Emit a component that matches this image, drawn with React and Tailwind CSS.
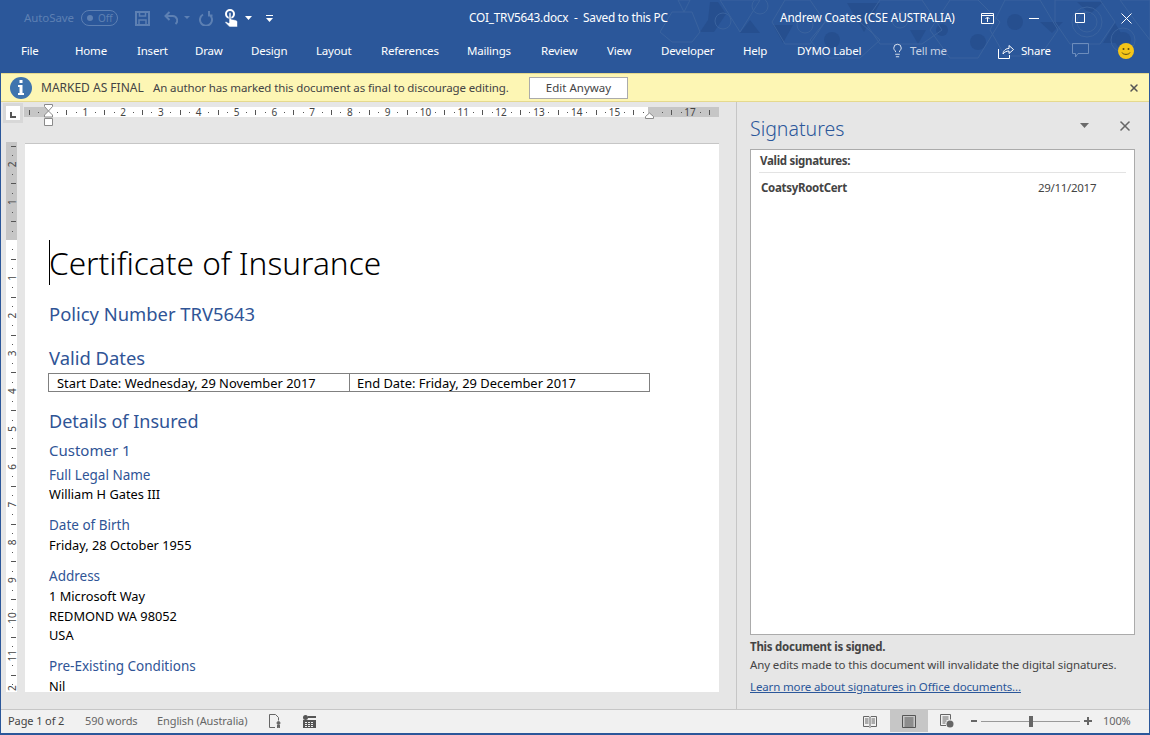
import { Lightbulb, X } from 'lucide-react'

const sans = 'font-["Noto_Sans",sans-serif]'

const tabs = [
  { label: 'File', w: 'w-[54px]' },
  { label: 'Home', w: 'w-[62px]' },
  { label: 'Insert', w: 'w-[58px]' },
  { label: 'Draw', w: 'w-[56px]' },
  { label: 'Design', w: 'w-[65px]' },
  { label: 'Layout', w: 'w-[65px]' },
  { label: 'References', w: 'w-[86px]' },
  { label: 'Mailings', w: 'w-[74px]' },
  { label: 'Review', w: 'w-[66px]' },
  { label: 'View', w: 'w-[54px]' },
  { label: 'Developer', w: 'w-[82px]' },
  { label: 'Help', w: 'w-[54px]' },
  { label: 'DYMO Label', w: 'w-[95px]' },
]

function TitlePattern() {
  // faint hexagon and triangle texture behind the title bar
  return (
    <svg className="absolute left-[660px] top-0" width="490" height="73" viewBox="0 0 490 73">
      <g fill="#264f8f">
        <polygon points="50,2 58,2 66,14 54,32 40,32 48,20" />
        <polygon points="90,20 100,33 80,33" />
        <polygon points="113,25 133,25 123,43" />
        <polygon points="187,3 220,3 204,32" />
        <polygon points="380,22 403,22 392,33" />
        <polygon points="417,2 443,2 430,14" />
        <polygon points="443,43 467,43 455,23" />
        <polygon points="250,30 266,30 258,44" />
        <circle cx="172" cy="40" r="8" />
        <circle cx="282" cy="30" r="6" />
        <circle cx="318" cy="42" r="8" />
        <circle cx="355" cy="22" r="8" />
        <circle cx="463" cy="40" r="8" />
      </g>
      <g fill="none" stroke="#3a639f" strokeWidth="1">
        <polygon points="18,0 30,0 24,12" />
        <polygon points="0,32 12,12 32,12 40,32 32,42 12,42" />
        <circle cx="63" cy="21" r="8" />
        <circle cx="100" cy="6" r="8" />
        <polygon points="60,0 80,32 100,0" />
        <polygon points="125,0 150,0 165,22 150,44 125,44 112,22" />
        <circle cx="145" cy="25" r="8" />
        <polygon points="165,22 200,22 220,40 200,58 165,58 150,40" />
        <polygon points="220,0 262,0 282,30 262,44 220,44 205,22" />
        <circle cx="240" cy="20" r="8" />
        <polygon points="290,0 318,0 340,22 318,58 290,58 270,30" />
        <polygon points="345,0 380,0 398,30 380,56 345,56 330,30" />
        <polygon points="395,0 440,0 455,22 440,44 410,44 395,22" />
        <circle cx="427" cy="22" r="10" />
        <circle cx="427" cy="22" r="15" />
        <polygon points="460,0 490,0 490,40 476,22" />
        <circle cx="463" cy="40" r="12" />
      </g>
    </svg>
  )
}

function QuickAccess() {
  return (
    <div className="flex items-center">
      <span className="ml-[24px] w-[50px] text-[11.5px] tracking-[-0.1px] text-[#5d80b3]">AutoSave</span>
      <span className="ml-[7px] flex h-[16px] w-[37px] items-center rounded-full border border-[#5d80b3] pl-[5px] text-[10px] text-[#5d80b3]">
        <span className="h-[6px] w-[6px] rounded-full bg-[#5d80b3]" />
        <span className="ml-[5px]">Off</span>
      </span>
      <svg className="ml-[17px]" width="15" height="15" viewBox="0 0 15 15" fill="none" stroke="#5d80b3" strokeWidth="2">
        <path d="M1 1h13v13H1z" />
        <path d="M4.500 1v4h6V1M4 14V9h7v5" strokeWidth="1.500" />
      </svg>
      <svg className="ml-[14px]" width="14" height="14" viewBox="0 0 14 14" fill="none" stroke="#5d80b3" strokeWidth="2">
        <path d="M5.500 1 1.500 5l4 4M1.500 5h7a4.500 4.500 0 0 1 3 8" />
      </svg>
      <svg className="ml-[6px]" width="6" height="4" viewBox="0 0 6 4" fill="#5d80b3">
        <path d="M0 0h6L3 3z" />
      </svg>
      <svg className="ml-[9px]" width="14" height="15" viewBox="0 0 14 15" fill="none" stroke="#5d80b3" strokeWidth="2">
        <path d="M4 3.500a6 6 0 1 0 6 0M10 0v4.500h3.500" />
      </svg>
      <svg className="ml-[11px]" width="14" height="19" viewBox="0 0 14 19">
        <circle cx="6" cy="5" r="4" fill="none" stroke="#fff" strokeWidth="2" />
        <path d="M5 4.500a1 1 0 0 1 2 0V10l4.500 1c1.200.3 2 1 2 2.200V18H5.500L1 13.500l1-1 3 1.500z" fill="#fff" stroke="#2b579a" strokeWidth="0.600" />
      </svg>
      <svg className="ml-[7px]" width="7" height="4" viewBox="0 0 7 4" fill="#fff">
        <path d="M0 0h7L3.500 4z" />
      </svg>
      <svg className="ml-[14px]" width="7" height="7" viewBox="0 0 7 7" fill="#fff">
        <path d="M0 0h7v1H0zM0 3h7L3.500 7z" />
      </svg>
    </div>
  )
}

function WindowButtons() {
  return (
    <div className="flex items-center">
      <svg width="13" height="11" viewBox="0 0 13 11" fill="none" stroke="#fff">
        <path d="M.5.500h12v10H.5zM.5 2.500h12M6.500 9V4.500M4.500 6l2-2 2 2" />
      </svg>
      <svg className="ml-[35px]" width="10" height="10" viewBox="0 0 10 10" stroke="#fff">
        <path d="M0 5.500h10" />
      </svg>
      <svg className="ml-[36px]" width="10" height="10" viewBox="0 0 10 10" fill="none" stroke="#fff">
        <path d="M.5.500h9v9h-9z" />
      </svg>
      <svg className="ml-[36px] mr-[18px]" width="11" height="11" viewBox="0 0 11 11" stroke="#fff">
        <path d="m.5.500 10 10M10.500.500l-10 10" />
      </svg>
    </div>
  )
}

function HRuler() {
  const ticks = []
  for (let i = -2; i <= 78; i++) {
    const x = 47.5 + i * 9.45
    if (x > 718) break
    const q = ((i % 4) + 4) % 4
    if (q === 0) continue
    ticks.push(
      q === 2
        ? <rect key={i} x={Math.round(x)} y="8" width="1" height="5" fill="#555" />
        : <rect key={i} x={Math.round(x)} y="10" width="1" height="1" fill="#555" />
    )
  }
  const nums = []
  for (let n = 1; n <= 17; n++) {
    if (n === 16) continue
    nums.push(
      <text key={n} x={47.5 + n * 37.8} y="14" textAnchor="middle" fontSize="10" fill="#444" fontFamily="Noto Sans, sans-serif">{n}</text>
    )
  }
  return (
    <svg className="absolute left-[-1px] top-0" width="720" height="26" viewBox="0 0 720 26">
      <rect x="24" y="5" width="24" height="10" fill="#c6c6c6" />
      <rect x="48" y="5" width="600" height="10" fill="#fff" />
      <rect x="648" y="5" width="71" height="10" fill="#c6c6c6" />
      {ticks}
      {nums}
      <path d="M44.500 2.500h8v2l-4 4.500-4-4.500zM44.500 15v-2l4-4 4 4v2z" fill="#fff" stroke="#8a8a8a" />
      <path d="M44.500 16.500h8v7h-8z" fill="#fff" stroke="#8a8a8a" />
      <path d="M645.500 16.500v-2l4-3.500 4 3.500v2z" fill="#fff" stroke="#8a8a8a" />
    </svg>
  )
}

function VRuler() {
  const ticks = []
  for (let i = -10; i <= 48; i++) {
    const y = 98 + i * 9.45
    if (y < 2 || y > 549) continue
    const q = ((i % 4) + 4) % 4
    if (q === 0) continue
    ticks.push(
      q === 2
        ? <rect key={i} x="7" y={Math.round(y)} width="5" height="1" fill="#555" />
        : <rect key={i} x="8" y={Math.round(y)} width="1" height="1" fill="#555" />
    )
  }
  const nums = []
  for (let n = -2; n <= 11; n++) {
    if (n === 0) continue
    const y = 98 + n * 37.8
    nums.push(
      <text key={n} x="0" y="0" transform={`translate(12 ${y}) rotate(-90)`} textAnchor="middle" fontSize="10" fill="#444" fontFamily="Noto Sans, sans-serif">{Math.abs(n)}</text>
    )
  }
  return (
    <svg className="ml-[3px] mt-[40px]" width="16" height="550" viewBox="0 0 16 550">
      <rect x="2" y="0" width="11" height="98" fill="#c6c6c6" />
      <rect x="2" y="98" width="11" height="452" fill="#fff" />
      {ticks}
      {nums}
      <text x="0" y="0" transform="translate(12 549) rotate(-90)" textAnchor="start" fontSize="10" fill="#444" fontFamily="Noto Sans, sans-serif">2</text>
    </svg>
  )
}

function Heading({ className, children }) {
  return <div className={`text-[#2f5496] ${className}`}>{children}</div>
}

function Document() {
  return (
    <div className="ml-[5px] mt-[41px] flex h-[549px] w-[694px] flex-col overflow-hidden border-t border-[#c6c6c6] bg-white pl-[24px] pr-[69px] text-black">
      <div className="relative mt-[96px] h-[46px] text-[31.6px] font-light leading-[46px]">
        <span className="absolute left-0 top-0 h-[45px] w-px bg-black" />
        Certificate of Insurance
      </div>
      <Heading className="mt-[15px] text-[18.4px] leading-[26px]">Policy Number TRV5643</Heading>
      <Heading className="mt-[18px] text-[18.4px] leading-[26px]">Valid Dates</Heading>
      <div className="-ml-px mt-[2px] flex h-[19px] w-[602px] border border-[#808080] text-[12.9px] leading-[18px]">
        <div className="w-[301px] border-r border-[#808080] pl-[8px]">Start Date: Wednesday, 29 November 2017</div>
        <div className="pl-[7px]">End Date: Friday, 29 December 2017</div>
      </div>
      <Heading className="mt-[16px] text-[18px] leading-[26px]">Details of Insured</Heading>
      <Heading className="mt-[5px] text-[15px] leading-[22px]">Customer 1</Heading>
      <Heading className="mt-[4px] text-[13.5px] leading-[20px]">Full Legal Name</Heading>
      <div className="text-[12.8px] leading-[18px]">William H Gates III</div>
      <Heading className="mt-[12px] text-[13.5px] leading-[20px]">Date of Birth</Heading>
      <div className="text-[12.8px] leading-[20px]">Friday, 28 October 1955</div>
      <Heading className="mt-[11px] text-[13.5px] leading-[20px]">Address</Heading>
      <div className="text-[12.8px] leading-[21px]">1 Microsoft Way</div>
      <div className="text-[12.8px] leading-[18px]">REDMOND WA 98052</div>
      <div className="text-[12.8px] leading-[20px]">USA</div>
      <Heading className="mt-[11px] text-[13.5px] leading-[20px]">Pre-Existing Conditions</Heading>
      <div className="text-[12.8px] leading-[20px]">Nil</div>
    </div>
  )
}

function SignaturePane() {
  return (
    <div className="flex w-[413px] flex-col border-l border-[#c6c6c6] pl-[13px] pr-[14px]">
      <div className="flex h-[47px] shrink-0 items-center">
        <span className="mt-[7px] text-[19.5px] font-light text-[#2b579a]">Signatures</span>
        <svg className="ml-auto mt-[-1px]" width="9" height="5" viewBox="0 0 9 5" fill="#6a6a6a">
          <path d="M0 0h9L4.500 5z" />
        </svg>
        <X className="ml-[28px] mr-[2px] text-[#666]" size={16} strokeWidth={2.4} />
      </div>
      <div className="h-[486px] shrink-0 border border-[#ababab] bg-white px-[8px] text-[11.5px] tracking-[-0.3px] text-[#444]">
        <div className="h-[23px] border-b border-[#e3e3e3] pl-px font-bold leading-[22px]">Valid signatures:</div>
        <div className="mt-[6px] flex pl-[2px] leading-[18px]">
          <span className="w-[277px] font-bold">CoatsyRootCert</span>
          <span>29/11/2017</span>
        </div>
      </div>
      <div className="mt-[3px] text-[11.5px] font-bold leading-[18px] tracking-[-0.25px] text-[#444]">This document is signed.</div>
      <div className="whitespace-nowrap text-[11.5px] leading-[18px] tracking-[-0.12px] text-[#444]">Any edits made to this document will invalidate the digital signatures.</div>
      <div className="mt-[4px] text-[11.5px] leading-[18px] tracking-[-0.14px] text-[#2b579a] underline">Learn more about signatures in Office documents...</div>
    </div>
  )
}

function StatusBar() {
  return (
    <div className="flex h-[24px] shrink-0 items-center border-t border-[#c6c6c6] bg-[#f1f1f1] pb-[1px] pl-[7px] text-[11px] tracking-[-0.1px] text-[#666]">
      <span className="w-[77px] text-[#444]">Page 1 of 2</span>
      <span className="w-[72px]">590 words</span>
      <span className="w-[112px]">English (Australia)</span>
      <svg width="12" height="14" viewBox="0 0 12 14" fill="none" stroke="#666">
        <path d="M6 13.500H.5V.5h6l3 3v3" />
        <circle cx="9.500" cy="9" r="1.500" fill="#666" />
        <path d="M8.500 11v3l1-1 1 1v-3" fill="#666" />
      </svg>
      <svg className="ml-[22px]" width="13" height="13" viewBox="0 0 13 13" fill="#555">
        <circle cx="2.500" cy="2.500" r="2.500" />
        <path d="M5 1h8v2H5zM0 5h13v8H0z" />
        <path d="M2 7h2v1H2zM5 7h2v1H5zM8 7h2v1H8zM2 9h2v1H2zM5 9h2v1H5zM8 9h2v1H8zM2 11h2v1H2zM5 11h2v1H5zM8 11h2v1H8z" fill="#f1f1f1" />
      </svg>
      <svg className="ml-auto" width="14" height="13" viewBox="0 0 14 13" fill="none" stroke="#666">
        <path d="M.5 1.500h5.500l1 1 1-1h5.500v10H8l-1 1-1-1H.5zM7 2.500v9M2 4h3.500M2 6h3.500M2 8h3.500M8.500 4H12M8.500 6H12M8.500 8H12" />
      </svg>
      <span className="ml-[13px] flex h-[22px] w-[38px] items-center justify-center self-start bg-[#c6c6c6]">
        <svg width="14" height="13" viewBox="0 0 14 13" fill="none" stroke="#555">
          <path d="M.5.500h13v12H.5zM2.500 3h9M2.500 5h9M2.500 7h9M2.500 9h9M2.500 11h9" />
        </svg>
      </span>
      <svg className="ml-[12px]" width="14" height="14" viewBox="0 0 14 14" fill="none" stroke="#666">
        <path d="M6 11.500H.5V.5h10v5M2.500 3h6M2.500 5h6M2.500 7h4M2.500 9h3" />
        <circle cx="10" cy="10" r="3.500" fill="#666" stroke="none" />
      </svg>
      <span className="ml-[17px] h-[2px] w-[6px] bg-[#666]" />
      <span className="relative ml-[4px] h-px w-[99px] bg-[#999]">
        <span className="absolute left-[48px] top-[-5px] h-[11px] w-[4px] bg-[#666]" />
      </span>
      <svg className="ml-[4px]" width="8" height="8" viewBox="0 0 8 8" fill="#666">
        <path d="M3 0h2v3h3v2H5v3H3V5H0V3h3z" />
      </svg>
      <span className="ml-[11px] mr-[20px] w-[26px]">100%</span>
    </div>
  )
}

export default function App() {
  return (
    <div className={`flex h-[735px] w-[1150px] flex-col overflow-hidden bg-[#2b579a] ${sans}`}>
      <div className="relative h-[73px] shrink-0">
        <TitlePattern />
        <div className="relative flex h-[36px] items-center text-[11.8px] text-white">
          <QuickAccess />
          <span className="absolute left-[469px] top-[9px] whitespace-pre tracking-[-0.24px]">COI_TRV5643.docx  -  Saved to this PC</span>
          <span className="absolute left-[780px] top-[9px] tracking-[-0.14px]">Andrew Coates (CSE AUSTRALIA)</span>
          <div className="ml-auto">
            <WindowButtons />
          </div>
        </div>
        <div className="relative flex h-[37px] items-center pb-[8px] pl-[21px] text-[11.5px] tracking-[-0.2px] text-white">
          {tabs.map((t) => (
            <span key={t.label} className={`${t.w} shrink-0`}>{t.label}</span>
          ))}
          <Lightbulb className="ml-[-2px] text-white" size={15} strokeWidth={1.3} />
          <span className="ml-[5px] w-[38px] shrink-0 whitespace-nowrap text-[#c5d1e3]">Tell me</span>
          <svg className="ml-[50px]" width="16" height="16" viewBox="0 0 16 16" fill="none" stroke="#fff">
            <path d="M.5 6v9.500h11V12M5 11c.500-4 3-5.500 6-5.500V2.500l4.500 4-4.500 4V8c-2.500 0-4.500 1-6 3z" />
          </svg>
          <span className="ml-[7px] w-[30px] shrink-0">Share</span>
          <svg className="ml-[21px]" width="17" height="15" viewBox="0 0 17 15" fill="none" stroke="#6d8dbc">
            <path d="M.5.500h16v10H6l-2.500 3.500v-3.500h-3z" />
          </svg>
          <span className="ml-[29px] flex h-[16px] w-[16px] items-center justify-center rounded-full bg-[#f5c518]">
            <svg width="16" height="16" viewBox="0 0 16 16" fill="none" stroke="#5b4a10">
              <circle cx="5.500" cy="6" r="1" fill="#5b4a10" stroke="none" />
              <circle cx="10.500" cy="6" r="1" fill="#5b4a10" stroke="none" />
              <path d="M4 9.500c1 2.500 7 2.500 8 0" />
            </svg>
          </span>
        </div>
      </div>

      <div className="flex min-h-0 flex-1 flex-col px-px">
        <div className="flex h-[29px] shrink-0 items-center border-y border-[#e5d98e] bg-[#fdf6b4] pl-[9px] text-[11.5px] text-[#444]">
          <span className="flex h-[22px] w-[22px] shrink-0 items-center justify-center rounded-full bg-[#3f74ae]">
            <svg width="6" height="15" viewBox="0 0 6 15" fill="#fff">
              <path d="M1.500 0h3v3h-3zM0 5h4.500v8H6v2H0v-2h1.500V7H0z" />
            </svg>
          </span>
          <span className="ml-[9px] w-[112px] shrink-0 text-[12px]">MARKED AS FINAL</span>
          <span className="w-[355px] shrink-0 whitespace-nowrap tracking-[-0.12px]">An author has marked this document as final to discourage editing.</span>
          <span className="ml-[21px] flex h-[22px] w-[99px] items-center justify-center border border-[#ababab] bg-white">Edit Anyway</span>
          <X className="ml-auto mr-[9px] text-[#555]" size={12} strokeWidth={3} />
        </div>

        <div className="flex min-h-0 flex-1 bg-[#e6e6e6]">
          <div className="relative w-[735px] shrink-0">
            <div className="absolute left-[2px] top-px z-10 flex h-[20px] w-[20px] items-center justify-center bg-[#d8d8d8]">
              <span className="flex h-[14px] w-[14px] items-end justify-center bg-white pb-[2px]">
                <span className="h-[6px] w-[6px] border-b-2 border-l-2 border-[#555]" />
              </span>
            </div>
            <HRuler />
            <div className="flex">
              <VRuler />
              <Document />
            </div>
          </div>
          <SignaturePane />
        </div>

        <StatusBar />
      </div>
      <div className="h-[2px] shrink-0" />
    </div>
  )
}
